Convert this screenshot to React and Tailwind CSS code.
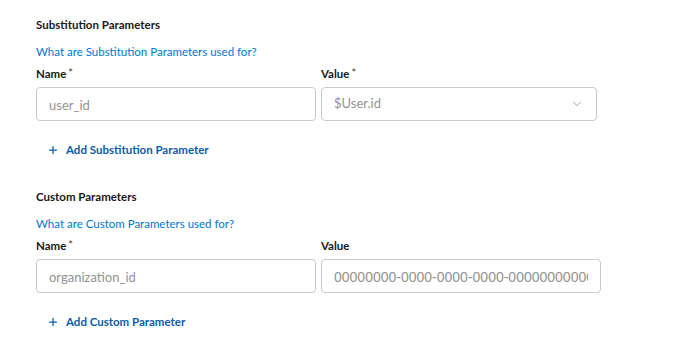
import { ChevronDown, Plus } from "lucide-react";

const Label = ({ children, required }) => (
    <div className="text-[11.5px] font-bold text-[#181818] leading-none h-[14px] flex items-center">
        {children}
        {required && <span className="ml-[2px] text-[#3e3e3c] font-normal text-[11px] -mt-[3px]">*</span>}
    </div>
);

const Field = ({ placeholder, mono, width = "w-[280px]" }) => (
    <div
        className={`${width} h-[34px] border border-[#c9c9c9] rounded-[4px] bg-white flex items-center px-[12px]`}
    >
        <div className="overflow-hidden flex-1">
            <span
                className={`whitespace-nowrap text-[#939393] ${
                    mono
                        ? "text-[14px] font-['Liberation_Sans',sans-serif]"
                        : "text-[13px]"
                }`}
            >
                {placeholder}
            </span>
        </div>
    </div>
);

const Section = ({ title, link, valueRequired, name, value, select, addText }) => (
    <div>
        <div className="h-[14px] flex items-center text-[11.5px] font-bold text-[#181818]">
            {title}
        </div>
        <div className="mt-[13px] h-[14px] flex items-center text-[11.5px] text-[#0176d3]">
            {link}
        </div>
        <div className="mt-[8px] flex gap-[5px]">
            <div className="flex flex-col gap-[6px]">
                <Label required>Name</Label>
                <Field placeholder={name} />
            </div>
            <div className="flex flex-col gap-[6px]">
                <Label required={valueRequired}>Value</Label>
                {select ? (
                    <div className="w-[276px] h-[34px] border border-[#c9c9c9] rounded-[4px] bg-white flex items-center justify-between px-[12px]">
                        <span className="text-[13px] text-[#939393]">{value}</span>
                        <ChevronDown size={14} className="text-[#939393]" strokeWidth={1.5} />
                    </div>
                ) : (
                    <Field placeholder={value} mono />
                )}
            </div>
        </div>
        <button className="mt-[22px] ml-[11px] flex items-center gap-[7px] text-[11.5px] font-bold text-[#0b5cab] h-[14px]">
            <Plus size={12} strokeWidth={2.5} />
            {addText}
        </button>
    </div>
);

const App = () => {
    return (
        <div className="w-[676px] h-[343px] bg-white pl-[36px] pt-[18px] font-['Lato',sans-serif] overflow-hidden">
            <Section
                title="Substitution Parameters"
                link="What are Substitution Parameters used for?"
                valueRequired
                name="user_id"
                value="$User.id"
                select
                addText="Add Substitution Parameter"
            />
            <div className="mt-[33px]">
                <Section
                    title="Custom Parameters"
                    link="What are Custom Parameters used for?"
                    name="organization_id"
                    value="00000000-0000-0000-0000-000000000000"
                    addText="Add Custom Parameter"
                />
            </div>
        </div>
    );
};

export default App;
